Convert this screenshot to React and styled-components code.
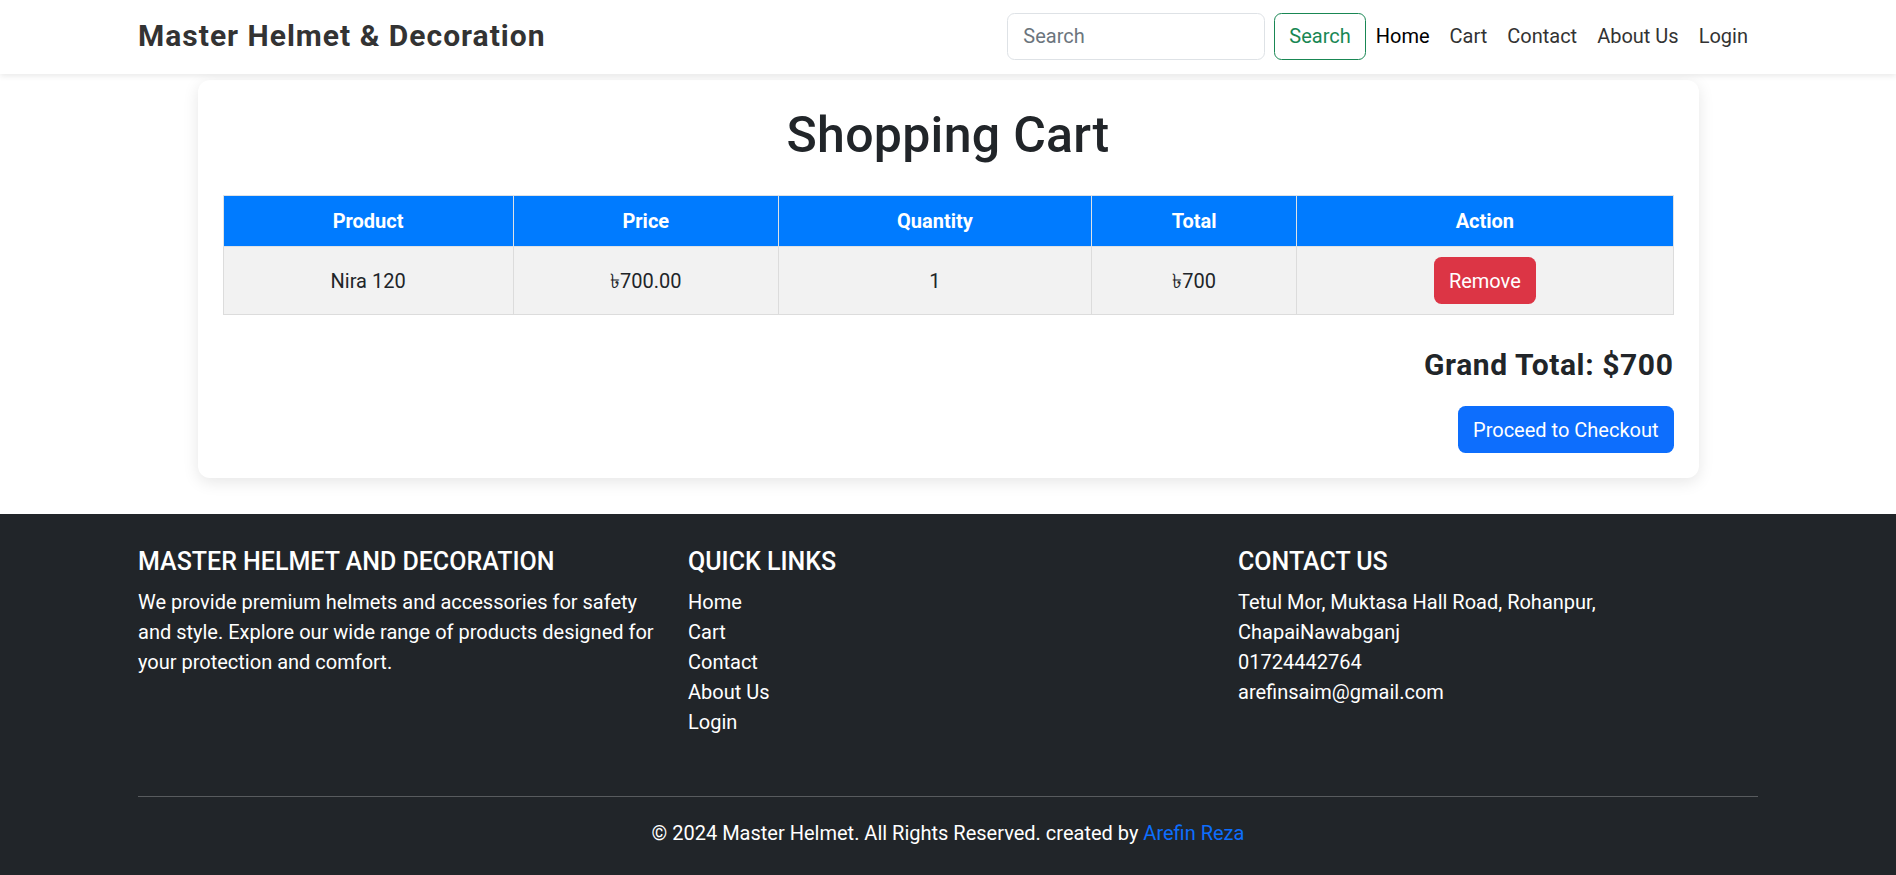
import React from "react";
import styled, { createGlobalStyle } from "styled-components";

const GlobalStyle = createGlobalStyle`
  html, body { margin: 0; padding: 0; }
  body {
    font-family: Roboto, "Liberation Sans", Arial, sans-serif;
    font-size: 20px;
    line-height: 1.5;
    color: #212529;
    background: #fff;
  }
  *, *::before, *::after { box-sizing: border-box; }
`;

const Container = styled.div`
  max-width: 1650px;
  margin: 0 auto;
  padding: 0 15px;
`;

const NavBar = styled.nav`
  background: #fff;
  padding: 11px 0 13px;
  box-shadow: 0 2px 6px rgba(0, 0, 0, 0.09);
  position: relative;
  z-index: 1;
`;

const NavInner = styled(Container)`
  display: flex;
  align-items: center;
  justify-content: space-between;
  min-height: 50px;
`;

const Brand = styled.a`
  font-size: 30px;
  font-weight: 700;
  line-height: 1.2;
  letter-spacing: 1px;
  color: #333;
  text-decoration: none;
`;

const NavRight = styled.div`
  display: flex;
  align-items: center;
`;

const SearchForm = styled.form`
  display: flex;
  align-items: center;
  gap: 9px;
`;

const SearchInput = styled.input`
  width: 258px;
  height: 47px;
  padding: 0 15px;
  font: inherit;
  font-size: 20px;
  color: #212529;
  border: 1px solid #dee2e6;
  border-radius: 7.5px;
  outline: none;
  &::placeholder { color: #6c757d; }
`;

const OutlineButton = styled.button`
  height: 47px;
  padding: 0 14px;
  font: inherit;
  font-size: 20px;
  color: #198754;
  background: transparent;
  border: 1px solid #198754;
  border-radius: 7.5px;
`;

const NavList = styled.ul`
  display: flex;
  list-style: none;
  margin: 0;
  padding: 0;
`;

const NavLink = styled.a`
  display: block;
  padding: 8px 10px;
  font-size: 20px;
  color: ${(p) => (p.$active ? "#000" : "#333")};
  text-decoration: none;
`;

const Card = styled.main`
  width: 1501px;
  margin: 6px auto 0;
  padding: 25px;
  background: #fff;
  border-radius: 12px;
  box-shadow: 0 4px 16px rgba(0, 0, 0, 0.1);
`;

const Title = styled.h1`
  margin: 0 0 30px;
  font-size: 50px;
  font-weight: 500;
  line-height: 1.2;
  letter-spacing: 0.3px;
  text-align: center;
  color: #212529;
`;

const Table = styled.table`
  width: 100%;
  border-collapse: collapse;
  border: 1px solid #dcdcdc;
`;

const Th = styled.th`
  width: ${(p) => p.$w}px;
  padding: 10px;
  background: #007bff;
  color: #fff;
  font-weight: 700;
  text-align: center;
  border: 1px solid #dee2e6;
`;

const Td = styled.td`
  padding: 10px;
  background: #f2f2f2;
  text-align: center;
  border: 1px solid #dcdcdc;
  color: #212529;
`;

const Button = styled.button`
  height: 47px;
  padding: 0 15px;
  font: inherit;
  font-size: 20px;
  color: #fff;
  background: ${(p) => p.$bg};
  border: none;
  border-radius: 7.5px;
`;

const Summary = styled.div`
  display: flex;
  flex-direction: column;
  align-items: flex-end;
  gap: 23px;
  margin-top: 32px;
`;

const GrandTotal = styled.h4`
  margin: 0;
  font-size: 30px;
  font-weight: 700;
  line-height: 1.2;
  letter-spacing: 0.6px;
  color: #212529;
`;

const Footer = styled.footer`
  margin-top: 36px;
  background: #212529;
  color: #fff;
  padding: 33px 0 30px;
`;

const FooterGrid = styled.div`
  display: grid;
  grid-template-columns: repeat(3, 1fr);
  gap: 30px;
`;

const FooterHeading = styled.h5`
  margin: 0 0 10px;
  font-size: 25px;
  font-weight: 500;
  line-height: 1.2;
  text-transform: uppercase;
`;

const FooterText = styled.p`
  margin: 0;
  line-height: 30px;
`;

const LinkList = styled.ul`
  list-style: none;
  margin: 0;
  padding: 0;
  line-height: 30px;
`;

const FooterLink = styled.a`
  color: #fff;
  text-decoration: none;
`;

const Rule = styled.hr`
  margin: 59px 0 21px;
  border: 0;
  border-top: 1px solid rgba(255, 255, 255, 0.25);
`;

const Copyright = styled.p`
  margin: 0;
  text-align: center;
  line-height: 30px;
`;

const CreditLink = styled.a`
  color: #0d6efd;
  text-decoration: none;
`;

const navItems = ["Home", "Cart", "Contact", "About Us", "Login"];

export default function App() {
  return (
    <>
      <GlobalStyle />
      <NavBar>
        <NavInner>
          <Brand href="#">Master Helmet &amp; Decoration</Brand>
          <NavRight>
            <SearchForm onSubmit={(e) => e.preventDefault()}>
              <SearchInput type="search" placeholder="Search" />
              <OutlineButton type="submit">Search</OutlineButton>
            </SearchForm>
            <NavList>
              {navItems.map((item, i) => (
                <li key={item}>
                  <NavLink href="#" $active={i === 0}>{item}</NavLink>
                </li>
              ))}
            </NavList>
          </NavRight>
        </NavInner>
      </NavBar>

      <Card>
        <Title>Shopping Cart</Title>
        <Table>
          <thead>
            <tr>
              <Th $w={290}>Product</Th>
              <Th $w={265}>Price</Th>
              <Th $w={313}>Quantity</Th>
              <Th $w={205}>Total</Th>
              <Th $w={376}>Action</Th>
            </tr>
          </thead>
          <tbody>
            <tr>
              <Td>Nira 120</Td>
              <Td>৳700.00</Td>
              <Td>1</Td>
              <Td>৳700</Td>
              <Td>
                <Button $bg="#dc3545">Remove</Button>
              </Td>
            </tr>
          </tbody>
        </Table>
        <Summary>
          <GrandTotal>Grand Total: $700</GrandTotal>
          <Button $bg="#0d6efd">Proceed to Checkout</Button>
        </Summary>
      </Card>

      <Footer>
        <Container>
          <FooterGrid>
            <div>
              <FooterHeading>Master Helmet and Decoration</FooterHeading>
              <FooterText>
                We provide premium helmets and accessories for safety and style. Explore our wide range of products designed for your protection and comfort.
              </FooterText>
            </div>
            <div>
              <FooterHeading>Quick Links</FooterHeading>
              <LinkList>
                {navItems.map((item) => (
                  <li key={item}>
                    <FooterLink href="#">{item}</FooterLink>
                  </li>
                ))}
              </LinkList>
            </div>
            <div>
              <FooterHeading>Contact Us</FooterHeading>
              <FooterText>
                Tetul Mor, Muktasa Hall Road, Rohanpur,
                <br />
                ChapaiNawabganj
              </FooterText>
              <FooterText>01724442764</FooterText>
              <FooterText>arefinsaim@gmail.com</FooterText>
            </div>
          </FooterGrid>
          <Rule />
          <Copyright>
            © 2024 Master Helmet. All Rights Reserved. created by{" "}
            <CreditLink href="#">Arefin Reza</CreditLink>
          </Copyright>
        </Container>
      </Footer>
    </>
  );
}
